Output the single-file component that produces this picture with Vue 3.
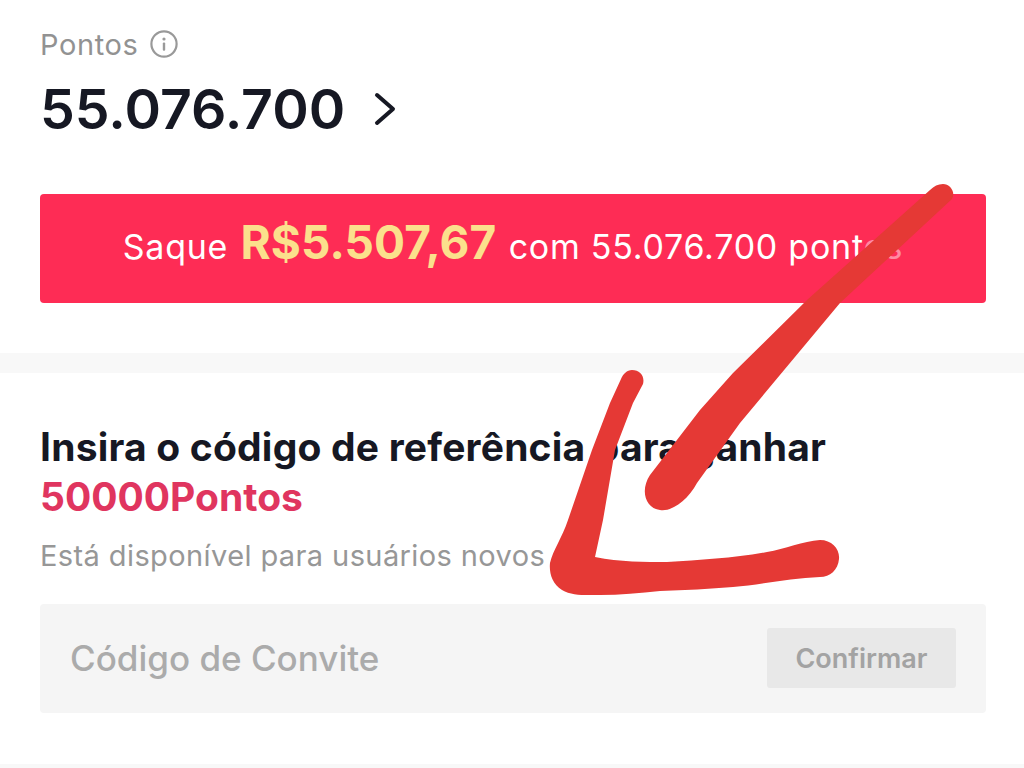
<script setup>
const points = '55.076.700'
</script>

<template>
  <div class="page">
    <section class="balance">
      <div class="label">
        <span>Pontos</span>
        <svg class="info" viewBox="0 0 28 28" width="28" height="28" fill="none">
          <circle cx="14" cy="14" r="12.6" stroke="#999" stroke-width="2.2" />
          <circle cx="14" cy="9" r="1.6" fill="#999" />
          <rect x="12.8" y="12.4" width="2.4" height="8.4" rx="1" fill="#999" />
        </svg>
      </div>
      <div class="points">
        <span>{{ points }}</span>
        <svg class="chev" viewBox="0 0 22 34" width="22" height="34" fill="none">
          <path d="M3 3 L19 17 L3 31" stroke="#161823" stroke-width="4" stroke-linecap="round" stroke-linejoin="round" />
        </svg>
      </div>
      <button class="cash">
        Saque <b>R$5.507,67</b> com {{ points }} pont<span class="faded">os</span>
      </button>
    </section>
    <div class="band"></div>
    <section class="invite">
      <h2>Insira o código de referência para ganhar <em>50000Pontos</em></h2>
      <p>Está disponível para usuários novos</p>
      <div class="field">
        <span class="ph">Código de Convite</span>
        <button class="confirm">Confirmar</button>
      </div>
    </section>
    <div class="band-end"></div>
    <svg class="scribble" viewBox="0 0 1024 768" width="1024" height="768">
      <path d="M943 184 C950 184 956 192 952 199 L840 303 L740 423 L697 483 C688 500 672 512 660 510 C645 508 640 490 650 475 L700 410 L733 373 L807 300 L930 190 C934 186 938 184 943 184 Z" />
      <path d="M632 370 C640 370 645 376 643 384 L633 403 L615 450 L603 520 L595 557 C620 562 645 562 667 562 C700 560 735 558 767 552 C785 549 803 541 820 540 C832 540 840 549 839 559 C838 570 830 577 820 577 C790 578 760 585 733 587 C710 589 685 590 660 591 C640 593 620 595 600 595 C585 595 572 596 562 590 C552 584 549 573 550 563 C553 550 562 538 568 520 L592 450 L610 403 L621 379 C623 374 627 370 632 370 Z" />
    </svg>
  </div>
</template>

<style scoped>
.page {
  position: relative;
  width: 1024px;
  height: 768px;
  overflow: hidden;
  background: #fff;
  font-family: Inter, "Liberation Sans", sans-serif;
  color: #161823;
}
.balance {
  padding: 27px 38px 50px 40px;
}
.label {
  display: flex;
  align-items: center;
  gap: 12px;
  height: 34px;
  font-size: 29px;
  letter-spacing: 0.6px;
  color: #929292;
}
.points {
  display: flex;
  align-items: center;
  gap: 29px;
  margin-top: 18px;
  height: 60px;
  font-size: 55.4px;
  font-weight: 600;
  line-height: 60px;
}
.cash {
  display: block;
  width: 946px;
  height: 109px;
  margin-top: 55px;
  padding: 0 0 13px;
  border: 0;
  border-radius: 4px;
  background: #fe2c55;
  color: #fff;
  font: inherit;
  font-size: 34px;
  letter-spacing: 0.75px;
}
.cash b {
  font-size: 46px;
  letter-spacing: 0.1px;
  color: #fbe08c;
  font-weight: 700;
  margin: 0 2px;
}
.faded {
  opacity: 0.45;
}
.band {
  height: 20px;
  background: #f8f8f8;
}
.invite {
  padding: 49px 38px 0 40px;
}
h2 {
  margin: 0;
  font-size: 39px;
  line-height: 50px;
  letter-spacing: 0.2px;
  font-weight: 700;
}
h2 em {
  display: block;
  font-style: normal;
  letter-spacing: 0;
  color: #e0355f;
}
p {
  margin: 16px 0 0;
  font-size: 29px;
  line-height: 36px;
  letter-spacing: 0.4px;
  color: #979797;
}
.field {
  display: flex;
  align-items: center;
  justify-content: space-between;
  width: 946px;
  height: 109px;
  margin-top: 30px;
  padding: 0 30px 1px;
  box-sizing: border-box;
  background: #f5f5f5;
  border-radius: 4px;
}
.ph {
  font-size: 35px;
  font-weight: 500;
  color: #ababab;
}
.confirm {
  width: 189px;
  height: 60px;
  border: 0;
  border-radius: 3px;
  background: #e8e8e8;
  color: #a3a3a3;
  font: inherit;
  font-size: 27px;
  font-weight: 600;
}
.band-end {
  height: 4px;
  margin-top: 51px;
  background: #f8f8f8;
}
.scribble {
  position: absolute;
  left: 0;
  top: 0;
  fill: #e53935;
}
</style>
